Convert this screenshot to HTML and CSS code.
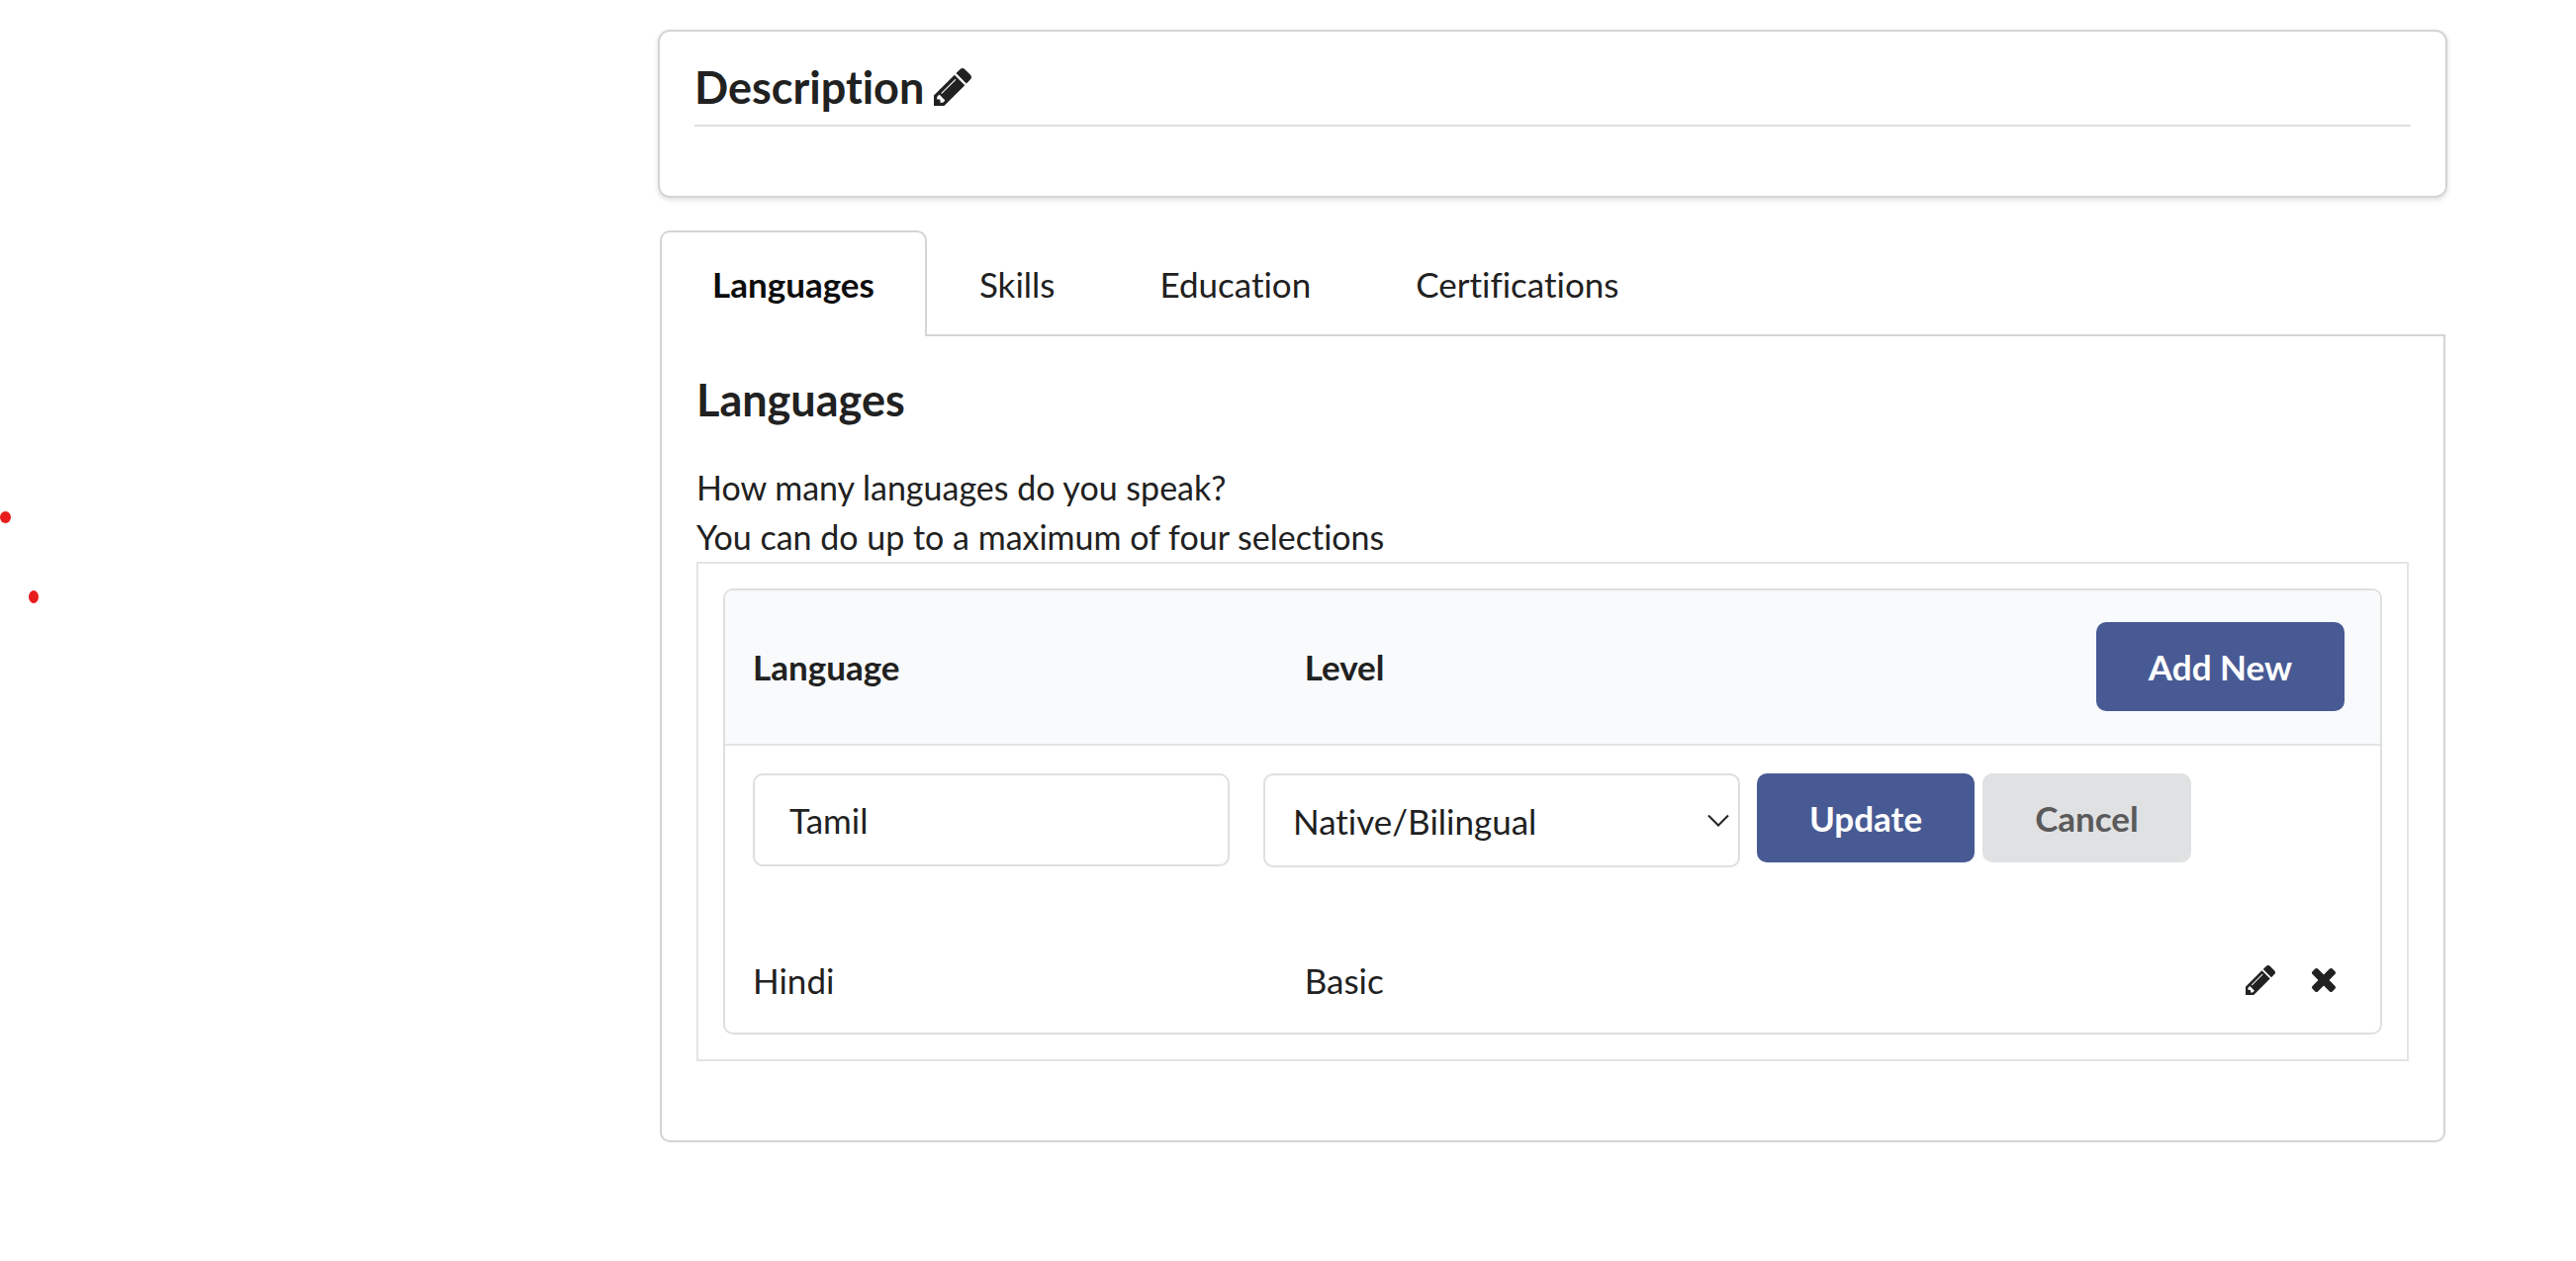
FILE: index.html
```html
<!DOCTYPE html>
<html lang="en">
<head>
<meta charset="utf-8">
<title>Profile</title>
<link rel="stylesheet" href="styles.css">
</head>
<body>
<svg class="sprite" aria-hidden="true">
  <symbol id="pencil" viewBox="128 149 1516 1515"><path d="M491 1536l91-91-235-235-91 91v107h128v128h107zm523-928q0-22-22-22-10 0-17 7l-542 542q-7 7-7 17 0 22 22 22 10 0 17-7l542-542q7-7 7-17zm-54-192l416 416-832 832h-416v-416zm683 96q0 53-37 90l-166 166-416-416 166-165q36-38 90-38 53 0 91 38l235 234q37 39 37 91z"/></symbol>
  <symbol id="times" viewBox="302 366 1188 1188"><path d="M1490 1322q0 40-28 68l-136 136q-28 28-68 28t-68-28l-294-294-294 294q-28 28-68 28t-68-28l-136-136q-28-28-28-68t28-68l294-294-294-294q-28-28-28-68t28-68l136-136q28-28 68-28t68 28l294 294 294-294q28-28 68-28t68 28l136 136q28 28 28 68t-28 68l-294 294 294 294q28 28 28 68z"/></symbol>
</svg>
<div class="page">
  <aside class="side">
    <span class="dot dot-first"></span>
    <span class="dot dot-second"></span>
  </aside>
  <main>
    <section class="card">
      <h3 class="title card-title">Description
        <button class="icon-button" type="button" aria-label="Edit description"><svg class="icon icon-large"><use href="#pencil"/></svg></button>
      </h3>
    </section>
    <div class="tabs-area">
      <nav class="tabs">
        <a class="tab active" href="#languages">Languages</a>
        <a class="tab" href="#skills">Skills</a>
        <a class="tab" href="#education">Education</a>
        <a class="tab" href="#certifications">Certifications</a>
      </nav>
      <section class="panel" id="languages">
        <h3 class="title">Languages</h3>
        <p class="intro">How many languages do you speak?<br>You can do up to a maximum of four selections</p>
        <div class="frame">
          <table class="list">
            <thead>
              <tr>
                <th scope="col">Language</th>
                <th scope="col">Level</th>
                <th class="right"><button class="button primary" type="button">Add New</button></th>
              </tr>
            </thead>
            <tbody>
              <tr>
                <td colspan="3">
                  <form class="fields">
                    <div class="field"><input class="control text" type="text" value="Tamil" aria-label="Language"></div>
                    <div class="field">
                      <div class="select-box">
                        <select class="control select" aria-label="Level">
                          <option>Basic</option>
                          <option>Conversational</option>
                          <option>Fluent</option>
                          <option selected>Native/Bilingual</option>
                        </select>
                        <svg class="chevron" viewBox="0 0 22 13"><path d="M1 1.500l10 10 10-10"/></svg>
                      </div>
                    </div>
                    <div class="buttons">
                      <button class="button primary" type="button">Update</button>
                      <button class="button" type="button">Cancel</button>
                    </div>
                  </form>
                </td>
              </tr>
              <tr>
                <td>Hindi</td>
                <td>Basic</td>
                <td>
                  <div class="actions">
                    <button class="icon-button" type="button" aria-label="Edit Hindi"><svg class="icon"><use href="#pencil"/></svg></button>
                    <button class="icon-button" type="button" aria-label="Delete Hindi"><svg class="icon icon-small"><use href="#times"/></svg></button>
                  </div>
                </td>
              </tr>
            </tbody>
          </table>
        </div>
      </section>
    </div>
  </main>
</div>
</body>
</html>
```
FILE: styles.css
```css
* {
  box-sizing: border-box;
}

body {
  margin: 0;
  background: #fff;
  color: #212121;
  font: 35px/50px Lato, "Liberation Sans", sans-serif;
  font-variant-ligatures: none;
}

.sprite {
  display: none;
}

.page {
  position: relative;
  display: grid;
  grid-template-columns: 665fr 1809fr 130fr;
  padding: 30px 0;
}

.dot {
  position: absolute;
  width: 11px;
  height: 12px;
  border-radius: 50%;
  background: #e81c1c;
}

.dot-first {
  left: 0;
  top: 517px;
}

.dot-second {
  left: 29px;
  top: 597px;
  width: 10px;
  height: 13px;
}

.title {
  margin: 0;
  font-size: 45px;
  line-height: 58px;
  font-weight: 700;
}

.card {
  min-height: 170px;
  padding: 27px 35px 26px;
  border: 2px solid #d4d4d5;
  border-radius: 12px;
  box-shadow: 0 2px 5px rgba(34, 36, 38, 0.15);
}

.card-title {
  display: flex;
  align-items: center;
  gap: 10px;
  padding-bottom: 9px;
  border-bottom: 2px solid #dedede;
}

.icon-button {
  display: flex;
  padding: 0;
  border: 0;
  background: none;
  color: inherit;
  cursor: pointer;
}

.icon {
  width: 30px;
  height: 30px;
  fill: currentColor;
}

.icon-large {
  width: 38px;
  height: 38px;
}

.icon-small {
  width: 24px;
  height: 24px;
}

.tabs-area {
  margin: 33px 2px 0;
}

.tabs {
  display: flex;
  border-bottom: 2px solid #d4d4d5;
}

.tab {
  padding: 27px 51px 26px;
  border: 2px solid transparent;
  border-bottom: 0;
  color: #212121;
  text-decoration: none;
}

.tab.active {
  margin-bottom: -2px;
  border-color: #d4d4d5;
  border-radius: 10px 10px 0 0;
  background: #fff;
  color: #0d0d0d;
  font-weight: 700;
}

.panel {
  padding: 35px 35px 80px;
  border: 2px solid #d4d4d5;
  border-top: 0;
  border-radius: 0 0 10px 10px;
}

.intro {
  margin: 35px 0 0;
  font-size: 34px;
}

.frame {
  padding: 25px;
  border: 2px solid #e4e4e4;
}

.list {
  width: 100%;
  table-layout: fixed;
  border: 2px solid #dedfdf;
  border-radius: 10px;
  border-spacing: 0;
}

.list th {
  padding: 32px 28px 33px;
  border-bottom: 2px solid #e3e4e5;
  background: #f9fafb;
  font-weight: 700;
  text-align: left;
}

.list th:first-child {
  border-top-left-radius: 8px;
}

.list th:last-child {
  border-top-right-radius: 8px;
}

.list th.right {
  padding-right: 36px;
  text-align: right;
}

.list td {
  padding: 28px;
}

.fields {
  display: grid;
  grid-template-columns: 5fr 5fr 6fr;
  align-items: start;
  margin: 0 -17px 33px;
}

.field {
  display: flex;
  padding: 0 17px;
}

.control {
  width: 100%;
  min-width: 0;
  height: 94px;
  margin: 0;
  border: 2px solid #dedfdf;
  border-radius: 10px;
  background: #fff;
  color: #212121;
  font: inherit;
}

.text {
  padding: 0 35px;
}

.select-box {
  position: relative;
  flex: 1;
  display: flex;
}

.select {
  height: 95px;
  padding: 0 28px;
  appearance: none;
}

.chevron {
  position: absolute;
  right: 11px;
  top: 41px;
  width: 22px;
  height: 13px;
  fill: none;
  stroke: #212121;
  stroke-width: 2;
  pointer-events: none;
}

.buttons {
  display: flex;
  gap: 8px;
}

.button {
  height: 90px;
  padding: 0 53px;
  border: 0;
  border-radius: 10px;
  background: #e0e1e2;
  color: #5a5a5b;
  font: inherit;
  font-weight: 700;
  vertical-align: middle;
  cursor: pointer;
}

.primary {
  background: #485a94;
  color: #fff;
}

.actions {
  display: flex;
  justify-content: flex-end;
  align-items: center;
  gap: 37px;
  padding-right: 17px;
}
```
